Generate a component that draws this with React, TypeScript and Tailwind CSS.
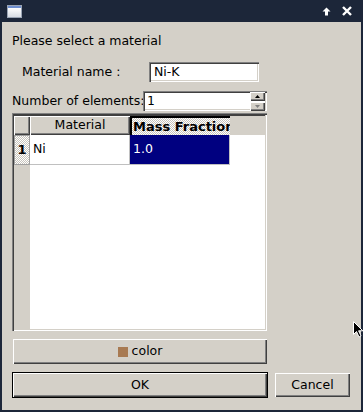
import React from "react";

// classic Qt/Motif-ish bevels
const raised =
  "shadow-[inset_1px_1px_0_#ffffff,inset_-1px_-1px_0_#404040,inset_-2px_-2px_0_#808080]";
const sunken =
  "shadow-[inset_1px_1px_0_#808080,inset_2px_2px_0_#404040,inset_-1px_-1px_0_#ffffff,inset_-2px_-2px_0_#d4d0c8]";
const checker =
  "bg-[repeating-conic-gradient(#ffffff_0%_25%,#c8c4bc_0%_50%)] bg-size-[2px_2px]";

function TitleIcon() {
  return (
    <svg width="15" height="13" viewBox="0 0 15 13">
      <defs>
        <linearGradient id="g" x1="0" y1="0" x2="0" y2="1">
          <stop offset="0" stopColor="#ffffff" />
          <stop offset="1" stopColor="#d8dce4" />
        </linearGradient>
      </defs>
      <rect x="0.5" y="0.5" width="14" height="12" fill="#eef0f4" stroke="#9aa4b4" />
      <rect x="1" y="1" width="13" height="2" fill="#6f8fd0" />
      <rect x="1" y="3" width="13" height="9" fill="url(#g)" />
    </svg>
  );
}

function Cursor() {
  return (
    <svg width="11" height="17" viewBox="0 0 11 17" className="absolute left-[353px] top-[321px]">
      <path d="M0.5 0.5 L0.5 13.5 L3.5 10.5 L6 16 L8 15 L5.6 9.8 L9.8 9.8 Z" fill="#000" stroke="#fff" strokeWidth="1" />
    </svg>
  );
}

function SpinArrow({ up }: { up: boolean }) {
  return (
    <div className={`h-[9px] w-[15px] bg-[#d4d0c8] flex items-center justify-center ${raised}`}>
      <svg width="5" height="3" viewBox="0 0 5 3">
        {up ? <path d="M2.5 0 L5 3 L0 3 Z" fill="#000" /> : <path d="M0 0 L5 0 L2.5 3 Z" fill="#808080" />}
      </svg>
    </div>
  );
}

export default function App() {
  return (
    <div className="relative w-[363px] h-[412px] bg-[#1c2639] px-[2px] pb-[2px] flex flex-col overflow-hidden font-['DejaVu_Sans',sans-serif] text-[12.5px] text-black">
      {/* title bar */}
      <div className="h-[22px] flex items-center pl-[5px] pr-[9px]">
        <TitleIcon />
        <div className="flex-1" />
        <svg width="9" height="9" viewBox="0 0 9 9" className="mr-[11px]">
          <path d="M4.5 0.5 L8.5 4.5 L6 4.5 L6 8.5 L3 8.5 L3 4.5 L0.5 4.5 Z" fill="#fff" />
        </svg>
        <svg width="10" height="10" viewBox="0 0 10 10">
          <path d="M1 1 L9 9 M9 1 L1 9" stroke="#fff" strokeWidth="2.4" />
        </svg>
      </div>

      {/* body */}
      <div className="flex-1 bg-[#d4d0c8] flex flex-col pl-[10px]">
        <div className="mt-[11px] h-[15px] leading-[15px]">Please select a material</div>

        <div className="mt-[14px] h-[20px] flex items-center">
          <span className="ml-[10px] w-[127px] shrink-0 whitespace-nowrap">Material name :</span>
          <div className={`w-[110px] h-[20px] bg-white pl-[5px] flex items-center ${sunken}`}>Ni-K</div>
        </div>

        <div className="mt-[9px] h-[20px] flex items-center">
          <span className="w-[131px] shrink-0 whitespace-nowrap">Number of elements:</span>
          <div className={`w-[124px] shrink-0 h-[20px] bg-white flex items-center pl-[4px] pr-[2px] ${sunken}`}>
            <span className="flex-1 font-['DejaVu_Sans_Mono',monospace]">1</span>
            <div className="flex flex-col gap-[1px]">
              <SpinArrow up />
              <SpinArrow up={false} />
            </div>
          </div>
        </div>

        {/* table */}
        <div className={`mt-[2px] w-[255px] h-[218px] p-[2px] bg-[#d4d0c8] flex flex-col ${sunken}`}>
          <div className="h-[20px] flex border-t border-[#404040]">
            <div className={`w-[16px] bg-[#d4d0c8] ${raised}`} />
            <div className={`w-[100px] bg-[#d4d0c8] flex items-center justify-center ${raised}`}>Material</div>
            <div className={`w-[100px] flex items-center pl-[1px] border-t-2 border-l-2 border-black font-bold text-[13px] whitespace-nowrap overflow-hidden ${checker}`}>
              Mass Fraction
            </div>
            <div className="flex-1 bg-[#d4d0c8]" />
          </div>
          <div className="h-[30px] flex">
            <div className={`w-[16px] flex items-center justify-center font-bold text-[13px] border border-[#a0a0a0] ${checker}`}>1</div>
            <div className="w-[100px] bg-white flex items-center pl-[3px] border-r border-b border-[#c0c0c0]">Ni</div>
            <div className="w-[100px] bg-[#000080] text-white flex items-center pl-[3px] border-r border-b border-[#c0c0c0]">1.0</div>
            <div className="flex-1 bg-white" />
          </div>
          <div className="flex-1 flex">
            <div className="w-[16px] bg-[#d4d0c8]" />
            <div className="flex-1 bg-white" />
          </div>
        </div>

        <div className={`mt-[8px] ml-[1px] w-[254px] h-[25px] flex items-center justify-center gap-[4px] ${raised}`}>
          <span className="w-[10px] h-[10px] bg-[#a87a52]" />
          <span>color</span>
        </div>

        <div className="mt-[8px] h-[26px] flex items-center">
          <div className={`w-[256px] h-[26px] border border-black flex items-center justify-center ${raised}`}>OK</div>
          <div className={`ml-[7px] w-[75px] h-[24px] flex items-center justify-center ${raised}`}>Cancel</div>
        </div>
      </div>

      <Cursor />
    </div>
  );
}
